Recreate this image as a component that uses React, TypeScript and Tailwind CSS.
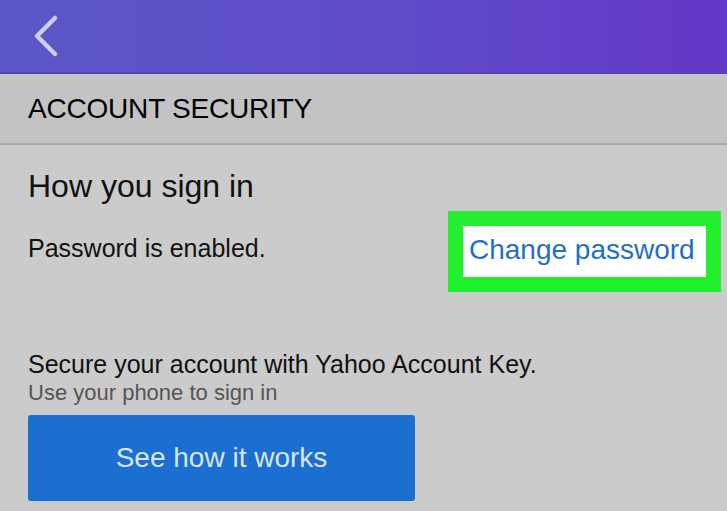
export default function App() {
  return (
    <div className="w-[727px] h-[511px] overflow-hidden bg-[#cbcbcb] font-['Liberation_Sans',Arial,sans-serif]">
      {/* top bar */}
      <div className="relative h-[74px] bg-gradient-to-r from-[#5a57c8] via-[#604dc9] to-[#6337c7] border-b-2 border-[#5542a8]">
        <svg className="absolute left-[31px] top-[14px]" width="30" height="44" viewBox="0 0 30 44" fill="none">
          <path d="M24 4 L6 22 L24 40" stroke="#d2cdea" strokeWidth="4.5" strokeLinecap="round" strokeLinejoin="round" />
        </svg>
      </div>
      <div className="h-[1px] bg-[#c9c5df]" />

      {/* section header */}
      <div className="h-[70px] flex items-center px-[28px] bg-[#c3c3c3] border-b-2 border-[#a8a8a8]">
        <span className="text-[28px] leading-none text-black tracking-[-0.2px]">ACCOUNT SECURITY</span>
      </div>

      {/* body */}
      <div className="pl-[28px]">
        <h2 className="mt-[25px] text-[32px] leading-none text-[#111]">How you sign in</h2>

        <div className="mt-[9px] flex items-center">
          <p className="mb-[7px] text-[25px] leading-none text-[#111]">Password is enabled.</p>
          <div className="ml-auto mr-[6px] border-[15px] border-[#22f02e]">
            <div className="w-[243px] h-[51px] bg-white flex items-center pl-[6px]">
              <span className="mb-[4px] text-[28px] leading-none text-[#1f6fc6]">Change password</span>
            </div>
          </div>
        </div>

        <p className="mt-[60px] text-[25px] leading-none text-[#111]">Secure your account with Yahoo Account Key.</p>
        <p className="mt-[5px] text-[22px] leading-none text-[#555]">Use your phone to sign in</p>

        <button className="mt-[11px] w-[387px] h-[86px] rounded-[3px] bg-[#1a6fd0] flex items-center justify-center">
          <span className="text-[28px] leading-none text-[#dbe6f5]">See how it works</span>
        </button>
      </div>
    </div>
  )
}
